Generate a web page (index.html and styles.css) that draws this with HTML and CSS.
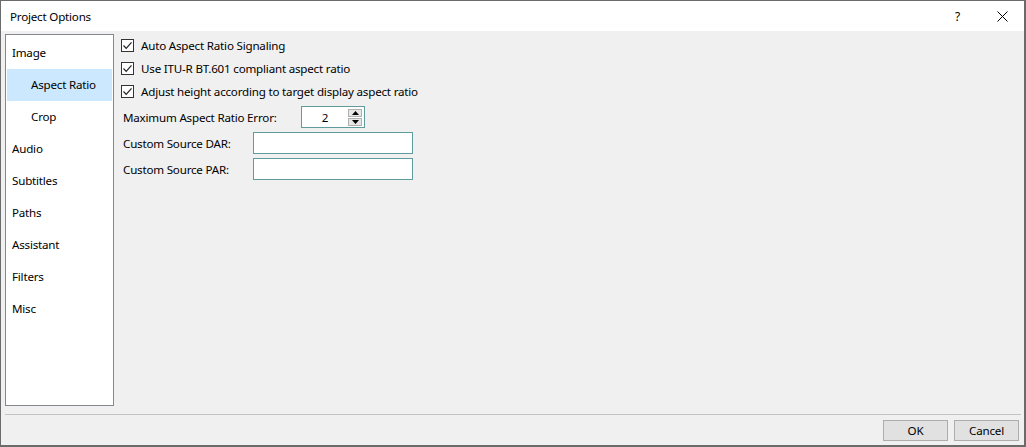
FILE: index.html
```html
<!DOCTYPE html>
<html>
<head>
<meta charset="utf-8">
<link rel="stylesheet" href="styles.css">
</head>
<body>
<div class="window">
  <div class="titlebar">
    <span class="title">Project Options</span>
    <span class="help">?</span>
    <svg class="close" width="11" height="11" viewBox="0 0 11 11"><path d="M0.5 0.5 L10.5 10.5 M10.5 0.5 L0.5 10.5" stroke="#000" stroke-width="1" fill="none"/></svg>
  </div>
  <div class="main">
    <div class="body">
      <ul class="nav">
        <li class="nav-item">Image</li>
        <li class="nav-item sub selected">Aspect Ratio</li>
        <li class="nav-item sub">Crop</li>
        <li class="nav-item">Audio</li>
        <li class="nav-item">Subtitles</li>
        <li class="nav-item">Paths</li>
        <li class="nav-item">Assistant</li>
        <li class="nav-item">Filters</li>
        <li class="nav-item">Misc</li>
      </ul>
      <div class="panel">
        <label class="check-row"><span class="checkbox"><svg width="11" height="11" viewBox="0 0 11 11"><path d="M1.5 5.5 L4.2 8.3 L9.5 2.3" stroke="#222" stroke-width="1.2" fill="none"/></svg></span>Auto Aspect Ratio Signaling</label>
        <label class="check-row"><span class="checkbox"><svg width="11" height="11" viewBox="0 0 11 11"><path d="M1.5 5.5 L4.2 8.3 L9.5 2.3" stroke="#222" stroke-width="1.2" fill="none"/></svg></span>Use ITU-R BT.601 compliant aspect ratio</label>
        <label class="check-row"><span class="checkbox"><svg width="11" height="11" viewBox="0 0 11 11"><path d="M1.5 5.5 L4.2 8.3 L9.5 2.3" stroke="#222" stroke-width="1.2" fill="none"/></svg></span>Adjust height according to target display aspect ratio</label>
        <div class="form-row">
          <span class="label label-wide">Maximum Aspect Ratio Error:</span>
          <div class="spin">
            <span class="spin-value">2</span>
            <div class="spin-buttons">
              <span class="spin-btn"><svg width="7" height="4" viewBox="0 0 7 4"><path d="M0 4 L3.5 0 L7 4 Z" fill="#000"/></svg></span>
              <span class="spin-btn"><svg width="7" height="4" viewBox="0 0 7 4"><path d="M0 0 L3.5 4 L7 0 Z" fill="#000"/></svg></span>
            </div>
          </div>
        </div>
        <div class="form-row">
          <span class="label">Custom Source DAR:</span>
          <div class="textbox"></div>
        </div>
        <div class="form-row">
          <span class="label">Custom Source PAR:</span>
          <div class="textbox"></div>
        </div>
      </div>
    </div>
    <div class="footer">
      <button class="btn">OK</button>
      <button class="btn">Cancel</button>
    </div>
  </div>
</div>
</body>
</html>
```
FILE: styles.css
```css
* { box-sizing: border-box; }
html, body { margin: 0; padding: 0; }
body {
  font-family: "Noto Sans", "Open Sans", sans-serif;
  font-size: 11.6px;
  letter-spacing: -0.2px;
  color: #000;
  background: #f0f0f0;
}
.window {
  width: 1026px;
  height: 447px;
  border: 1px solid #6b6b6b;
  border-right-width: 2px;
  border-bottom-width: 2px;
  background: #f0f0f0;
  display: flex;
  flex-direction: column;
}
.titlebar {
  height: 30px;
  background: #fff;
  display: flex;
  align-items: center;
  padding-left: 9px;
  flex: none;
}
.title { flex: 1; }
.help { margin-right: 37px; font-size: 12px; }
.close { margin-right: 16px; }
.main {
  flex: 1;
  display: flex;
  flex-direction: column;
  padding: 3px 3px 0 4px;
}
.body {
  display: flex;
  height: 372px;
}
.nav {
  list-style: none;
  margin: 0;
  width: 109px;
  height: 372px;
  background: #fff;
  border: 1px solid #828790;
  padding: 2px 1px;
}
.nav-item {
  height: 32px;
  line-height: 32px;
  padding-left: 5px;
  white-space: nowrap;
}
.nav-item.sub { padding-left: 24px; }
.nav-item.selected { background: #cce8ff; }
.panel {
  padding-left: 7px;
  display: flex;
  flex-direction: column;
}
.check-row {
  height: 23px;
  display: flex;
  align-items: center;
  white-space: nowrap;
}
.checkbox {
  width: 13px;
  height: 13px;
  border: 1px solid #333;
  background: #fff;
  margin-right: 7px;
  display: flex;
  align-items: center;
  justify-content: center;
}
.form-row {
  height: 26px;
  display: flex;
  align-items: center;
  padding-left: 2px;
}
.form-row:first-of-type { margin-top: 1px; }
.label { width: 130px; white-space: nowrap; }
.label-wide { width: 178px; }
.spin {
  width: 64px;
  height: 22px;
  border: 1px solid #5f9c9e;
  background: #fff;
  display: flex;
  align-items: center;
  padding-right: 2px;
}
.spin-value { flex: 1; text-align: center; }
.spin-buttons {
  display: flex;
  flex-direction: column;
  gap: 1px;
}
.spin-btn {
  width: 14px;
  height: 8px;
  background: #e6e6e6;
  border: 1px solid #b0b0b0;
  display: flex;
  align-items: center;
  justify-content: center;
}
.textbox {
  width: 160px;
  height: 22px;
  border: 1px solid #5f9c9e;
  background: #fff;
}
.footer {
  margin-top: 8px;
  border-top: 1px solid #c4c4c4;
  display: flex;
  justify-content: flex-end;
  gap: 6px;
  padding-top: 5px;
  padding-right: 2px;
}
.btn {
  width: 65px;
  height: 21px;
  background: #e1e1e1;
  border: 1px solid #adadad;
  font-family: inherit;
  font-size: 11.6px;
  letter-spacing: -0.2px;
  color: #000;
  padding: 0;
}
```
